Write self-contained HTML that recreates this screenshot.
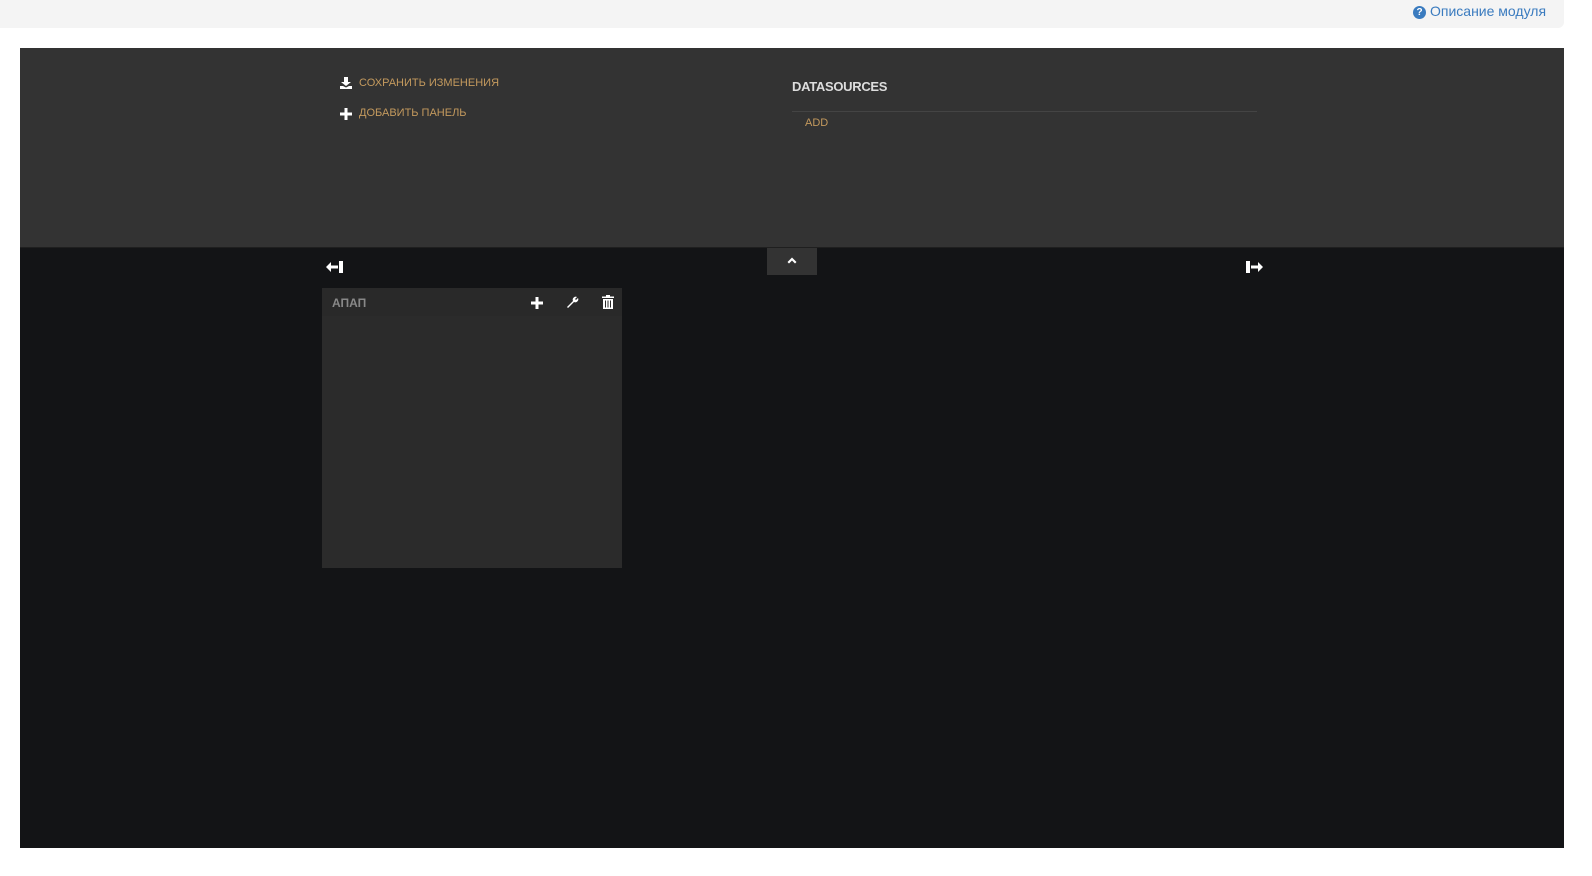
<!DOCTYPE html>
<html><head><meta charset="utf-8"><style>
*{margin:0;padding:0;box-sizing:border-box}
body{width:1592px;height:876px;background:#fff;font-family:"Liberation Sans",Arial,sans-serif;position:relative;overflow:hidden}
.top{position:absolute;left:0;top:0;width:1564px;height:28px;background:#f4f4f4;border-radius:0 0 6px 0}
.help{position:absolute;left:1413px;top:3px;font-size:14px;color:#3a7bbf;white-space:nowrap}
.help .q{display:inline-block;width:13px;height:13px;border-radius:50%;background:#3a7bbf;color:#fff;font-size:10px;font-weight:bold;text-align:center;line-height:13px;vertical-align:1px;margin-right:4px}
.main{position:absolute;left:20px;top:48px;width:1544px;height:800px;background:#131416}
.hdr{position:absolute;left:0;top:0;width:1544px;height:200px;background:#333;border-bottom:1px solid #1f1f1f}
.lnk{position:absolute;font-size:11px;color:#c49a5e;white-space:nowrap}
.lnk svg{position:absolute;left:-18px;top:0}
.ds{position:absolute;left:772px;top:31px;font-size:13px;font-weight:bold;color:#ddd;letter-spacing:-0.3px}
.sep{position:absolute;left:772px;top:63px;width:465px;height:1px;background:#444}
.tab{position:absolute;left:747px;top:200px;width:50px;height:27px;background:#333}
.panel{position:absolute;left:302px;top:240px;width:300px;height:280px;background:#2b2b2b}
.ph{position:absolute;left:0;top:0;width:300px;height:28px;background:#292929}
.pt{position:absolute;left:10px;top:8px;font-size:12px;font-weight:bold;color:#888}
</style></head><body>
<div class="top"><div class="help"><span class="q">?</span>Описание модуля</div></div>
<div class="main">
 <div class="hdr">
  <div class="lnk" style="left:339px;top:29px"><svg width="12" height="12" viewBox="0 0 12 12" style="left:-19px"><path d="M4 0h4v5h3L6 9 1 5h3z M0 9h3l3 1.5L9 9h3v3H0z" fill="#fff"/></svg>СОХРАНИТЬ ИЗМЕНЕНИЯ</div>
  <div class="lnk" style="left:339px;top:59px"><svg width="12" height="12" viewBox="0 0 12 12" style="left:-19px;top:1px"><path d="M4.5 0h3v4.5H12v3H7.5V12h-3V7.5H0v-3h4.5z" fill="#fff"/></svg>ДОБАВИТЬ ПАНЕЛЬ</div>
  <div class="ds">DATASOURCES</div>
  <div class="sep"></div>
  <div class="lnk" style="left:785px;top:69px">ADD</div>
 </div>
 <div class="tab"><svg width="50" height="27" viewBox="0 0 50 27"><path d="M20.5 14l4.5-4.5 4.5 4.5-1.5 1.5-3-3-3 3z" fill="#fff"/></svg></div>
 <svg style="position:absolute;left:305px;top:212px" width="20" height="14" viewBox="0 0 20 14"><path d="M1 7l5-5v3.5h7v3H6V12z M14 1h4v12h-4z" fill="#fff"/></svg>
 <svg style="position:absolute;left:1225px;top:212px" width="20" height="14" viewBox="0 0 20 14"><path d="M1 1h4v12H1z M6 5.5h7V2l5 5-5 5V8.5H6z" fill="#fff"/></svg>
 <div class="panel"><div class="ph"><div class="pt">АПАП</div>
  <svg style="position:absolute;left:209px;top:9px" width="12" height="12" viewBox="0 0 12 12"><path d="M4.5 0h3v4.5H12v3H7.5V12h-3V7.5H0v-3h4.5z" fill="#fff"/></svg>
  <svg style="position:absolute;left:244px;top:8px" width="13" height="13" viewBox="0 0 13 13"><path d="M1 11l6-6a3 3 0 0 1 4-4l-2 2 1 1 2-2a3 3 0 0 1-4 4l-6 6z" fill="#fff"/></svg>
  <svg style="position:absolute;left:280px;top:7px" width="12" height="14" viewBox="0 0 12 14"><path d="M4 0h4v1.5h4V3H0V1.5h4z M1 4h10v10H1z" fill="#fff"/><path d="M3.5 5.5v7M6 5.5v7M8.5 5.5v7" stroke="#292929" stroke-width="1"/></svg>
 </div></div>
</div>
</body></html>
